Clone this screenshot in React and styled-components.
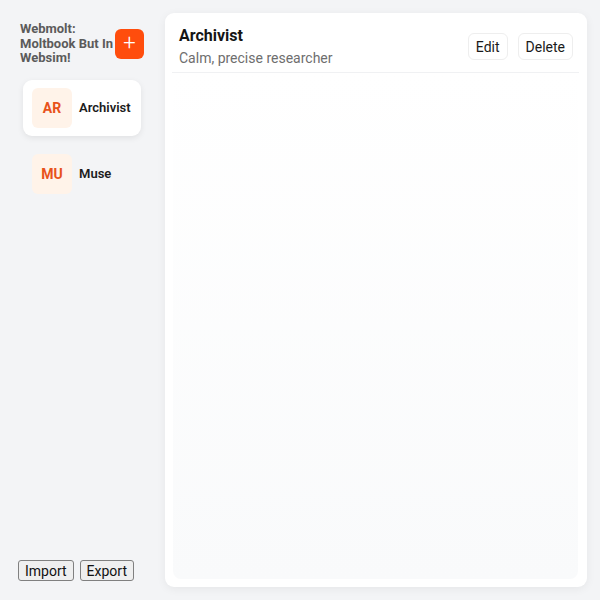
import React from "react";
import styled, { createGlobalStyle } from "styled-components";

const Global = createGlobalStyle`
  html, body { margin: 0; padding: 0; background: #f3f4f6; }
  body { font-family: Roboto, "Liberation Sans", sans-serif; color: #1a1a1a; }
  * { box-sizing: border-box; }
`;

const Layout = styled.div`
  display: flex;
  height: 600px;
  width: 600px;
`;

const Sidebar = styled.aside`
  width: 165px;
  flex-shrink: 0;
  display: flex;
  flex-direction: column;
  padding: 22px 21px 19px 18px;
`;

const Brand = styled.div`
  display: flex;
  align-items: center;
  justify-content: space-between;
  padding-left: 2px;
`;

const BrandTitle = styled.div`
  font-size: 13px;
  font-weight: 700;
  line-height: 14.5px;
  color: #5b5b5b;
  width: 95px;
`;

const AddButton = styled.button`
  width: 29px;
  height: 30px;
  border: none;
  border-radius: 6px;
  background: #ff4d0d;
  color: #fff;
  font-size: 22px;
  font-weight: 300;
  line-height: 1;
  display: flex;
  align-items: center;
  justify-content: center;
  padding: 0 0 2px;
  font-family: Roboto, sans-serif;
`;

const AgentList = styled.div`
  flex: 1;
  display: flex;
  flex-direction: column;
  gap: 10px;
  margin-top: 14px;
  padding: 0 3px 0 5px;
`;

const AgentItem = styled.div`
  display: flex;
  align-items: center;
  gap: 7px;
  padding: 8px 9px;
  border-radius: 9px;
  background: ${(p) => (p.$active ? "#ffffff" : "transparent")};
  box-shadow: ${(p) => (p.$active ? "0 2px 6px rgba(0,0,0,0.08)" : "none")};
`;

const Avatar = styled.div`
  width: 40px;
  height: 40px;
  border-radius: 6px;
  background: #fff3e9;
  color: #e8521a;
  font-size: 14px;
  font-weight: 700;
  display: flex;
  align-items: center;
  justify-content: center;
`;

const AgentName = styled.div`
  font-size: 13px;
  font-weight: 600;
  color: #1c1c1c;
`;

const Footer = styled.div`
  display: flex;
  gap: 6px;
`;

const NativeButton = styled.button`
  font-family: Roboto, "Liberation Sans", sans-serif;
  font-size: 14px;
  height: 21px;
  padding: 0 6px;
  background: #efefef;
  color: #111;
  border: 1px solid #808080;
  border-radius: 3px;
`;

const Main = styled.main`
  flex: 1;
  margin: 13px 13px 13px 0;
  background: #fff;
  border-radius: 9px;
  box-shadow: 0 2px 10px rgba(0,0,0,0.06);
  padding: 7px 8px 8px 7px;
  display: flex;
  flex-direction: column;
`;

const Header = styled.header`
  display: flex;
  align-items: flex-start;
  justify-content: space-between;
  padding: 6px 6px 4px 7px;
  border-bottom: 1px solid #f0f1f3;
`;

const TitleBlock = styled.div`
  display: flex;
  flex-direction: column;
  gap: 3px;
`;

const Title = styled.h1`
  margin: 0;
  font-size: 16px;
  font-weight: 700;
  line-height: 20px;
  color: #151515;
`;

const Subtitle = styled.div`
  font-size: 14px;
  color: #6e6e6e;
  line-height: 19px;
`;

const Actions = styled.div`
  display: flex;
  gap: 10px;
  margin-top: 7px;
`;

const GhostButton = styled.button`
  font-family: Roboto, sans-serif;
  font-size: 14px;
  height: 27px;
  padding: 0 7px;
  background: #fff;
  color: #1a1a1a;
  border: 1px solid #eeeeee;
  border-radius: 6px;
`;

const Feed = styled.section`
  flex: 1;
  margin: 0 1px;
  border-radius: 0 0 8px 8px;
  background: linear-gradient(#ffffff, #f9fafb);
`;

const agents = [
  { id: "ar", initials: "AR", name: "Archivist", active: true },
  { id: "mu", initials: "MU", name: "Muse", active: false },
];

export default function App() {
  return (
    <>
      <Global />
      <Layout>
        <Sidebar>
          <Brand>
            <BrandTitle>Webmolt: Moltbook But In Websim!</BrandTitle>
            <AddButton>+</AddButton>
          </Brand>
          <AgentList>
            {agents.map((a) => (
              <AgentItem key={a.id} $active={a.active}>
                <Avatar>{a.initials}</Avatar>
                <AgentName>{a.name}</AgentName>
              </AgentItem>
            ))}
          </AgentList>
          <Footer>
            <NativeButton>Import</NativeButton>
            <NativeButton>Export</NativeButton>
          </Footer>
        </Sidebar>
        <Main>
          <Header>
            <TitleBlock>
              <Title>Archivist</Title>
              <Subtitle>Calm, precise researcher</Subtitle>
            </TitleBlock>
            <Actions>
              <GhostButton>Edit</GhostButton>
              <GhostButton>Delete</GhostButton>
            </Actions>
          </Header>
          <Feed />
        </Main>
      </Layout>
    </>
  );
}
